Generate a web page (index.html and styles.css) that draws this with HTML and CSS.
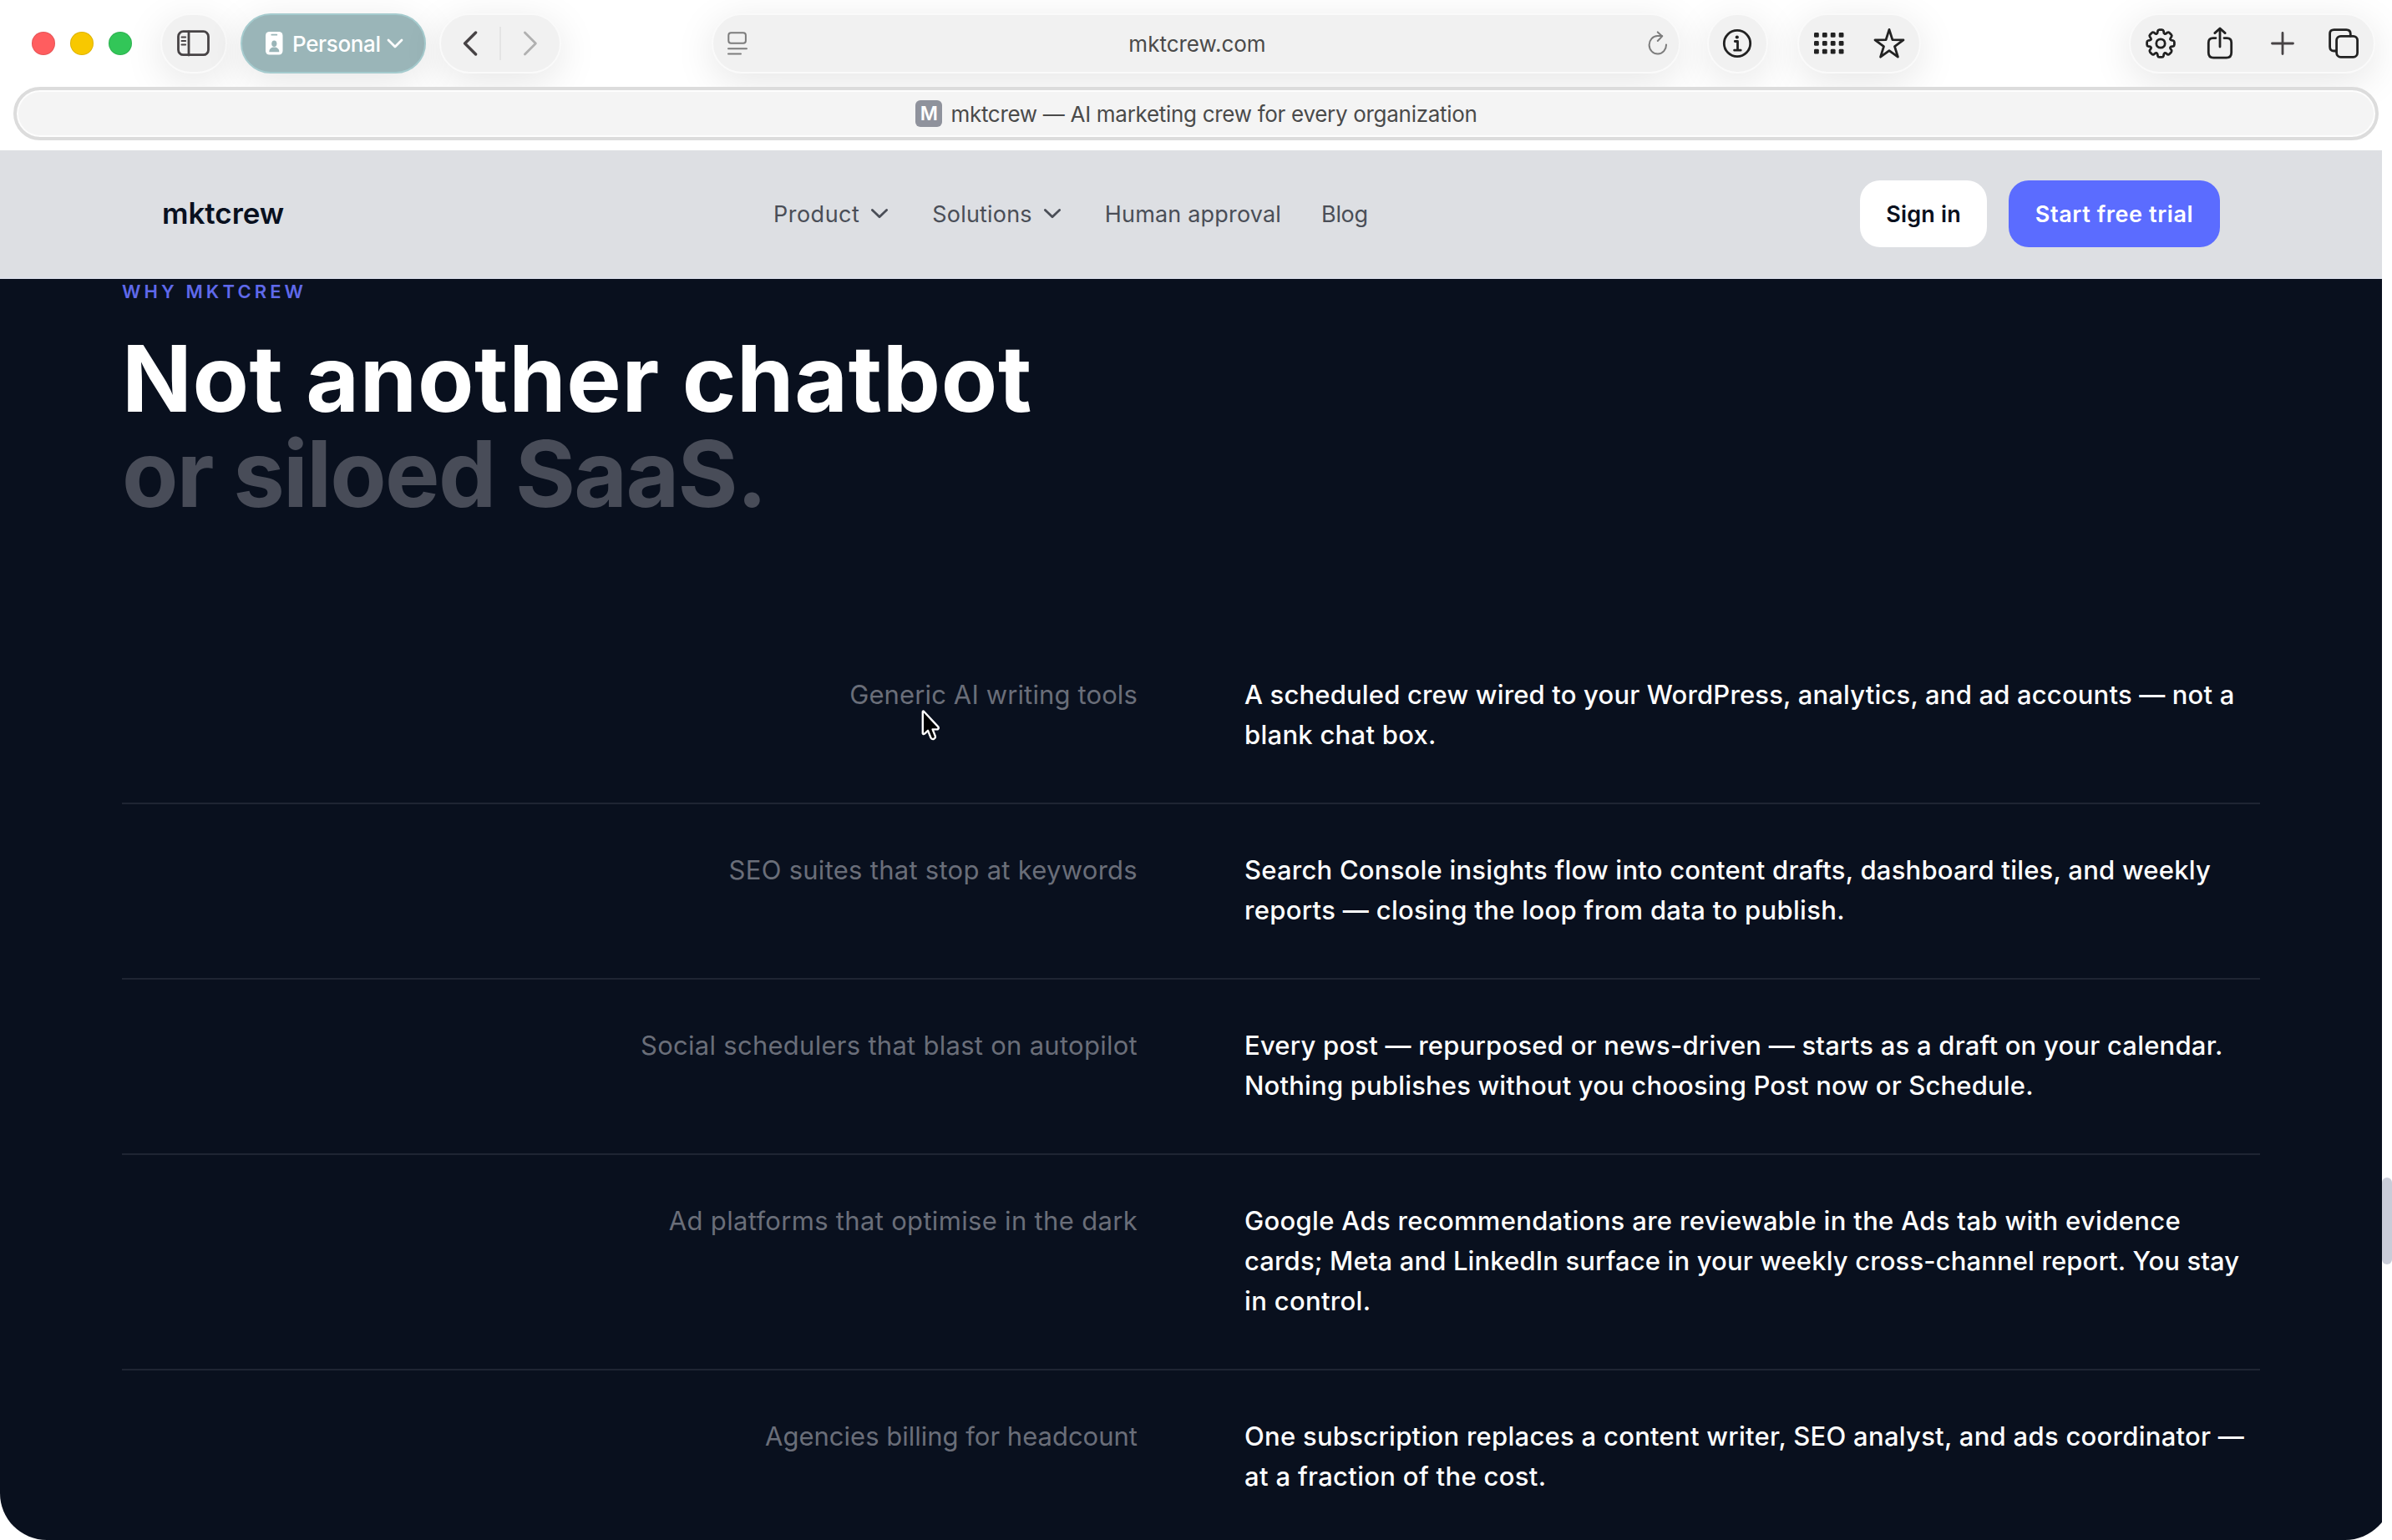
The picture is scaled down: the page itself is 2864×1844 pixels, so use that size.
FILE: index.html
```html
<!DOCTYPE html>
<html lang="en">
<head>
<meta charset="utf-8">
<title>mktcrew — AI marketing crew for every organization</title>
<link rel="stylesheet" href="styles.css">
</head>
<body>
<div class="window">
  <div class="toolbar">
    <div class="lights"><i class="light close"></i><i class="light minimize"></i><i class="light zoom"></i></div>

    <div class="pill sidebar-toggle">
      <svg class="line dark" width="40" height="32" viewBox="0 0 40 32"><rect x="1.5" y="1.7" width="36" height="28" rx="6"/><path d="M14 2v28"/><path class="thin" d="M5.5 8.6h4.6M5.5 13h4.6M5.5 17.5h4.6"/></svg>
    </div>

    <div class="pill profile">
      <svg width="21" height="28" viewBox="0 0 21 28"><rect width="20.5" height="27.5" rx="4.5" fill="#fff"/><path d="M7.3 3.7h6" stroke="#9ab5b8" stroke-width="1.8" stroke-linecap="round"/><ellipse cx="10.3" cy="14.2" rx="3.1" ry="3.8" fill="#9ab5b8"/><path d="M4.3 24.2c0-3.8 2.6-5.6 6-5.6s6 1.8 6 5.6z" fill="#9ab5b8"/></svg>
      <span class="profile-name">Personal</span>
      <svg class="line white" width="20" height="12" viewBox="0 0 20 12"><path d="M2 2l8 8 8-8"/></svg>
    </div>

    <div class="pill history">
      <svg class="line dark" width="18" height="30" viewBox="0 0 18 30"><path class="bold" d="M15.6 2L2.6 15l13 13"/></svg>
      <span class="divider"></span>
      <svg class="line faded" width="18" height="30" viewBox="0 0 18 30"><path d="M2.4 2l13 13-13 13"/></svg>
    </div>

    <div class="pill address">
      <svg class="line mid" width="24" height="28" viewBox="0 0 24 28"><rect x="1.3" y="1.2" width="20.6" height="12.6" rx="3"/><path d="M1 20.2h22M1 26.5h15"/></svg>
      <span class="url">mktcrew.com</span>
      <svg class="line mid" width="26" height="30" viewBox="0 0 26 30"><path d="M23 16.4A10.2 10.8 0 1 1 12.6 6h5.6M12.8 1.4L18.2 6.4L12.8 12"/></svg>
    </div>

    <div class="pill info">
      <svg class="line black" width="36" height="36" viewBox="0 0 36 36"><circle cx="18" cy="18" r="15.7"/><path d="M15.3 15.5h3.2v10.6M14.6 26.2h7.6"/><circle cx="17.8" cy="10.5" r="2.1" class="solid"/></svg>
    </div>

    <div class="pill tools">
      <svg width="36" height="28" viewBox="0 0 36 28" fill="#222"><g id="dots"><rect x="0" y="1" width="5.8" height="5.8" rx="1.4"/><rect x="9.9" y="1" width="5.8" height="5.8" rx="1.4"/><rect x="19.8" y="1" width="5.8" height="5.8" rx="1.4"/><rect x="29.7" y="1" width="5.8" height="5.8" rx="1.4"/></g><use href="#dots" y="10"/><use href="#dots" y="19.8"/></svg>
      <svg class="line black" width="38" height="38" viewBox="0 0 38 38"><path d="M19 2.4L22.9 14.6L36 14.9L25.5 22.6L29.4 35.2L19 27.6L8.6 35.2L12.5 22.6L2 14.9L15.1 14.6Z"/></svg>
    </div>

    <div class="pill actions">
      <svg class="line black" width="38" height="38" viewBox="-19 -19 38 38"><defs><path id="tooth" d="M-4.7 -11.7C-3.4 -12.2 -3.9 -13.2 -3.5 -14.8Q-3.1 -16.4 -1.6 -16.4H1.6Q3.1 -16.4 3.5 -14.8C3.9 -13.2 3.4 -12.2 4.7 -11.7"/></defs><use href="#tooth"/><use href="#tooth" transform="rotate(45)"/><use href="#tooth" transform="rotate(90)"/><use href="#tooth" transform="rotate(135)"/><use href="#tooth" transform="rotate(180)"/><use href="#tooth" transform="rotate(225)"/><use href="#tooth" transform="rotate(270)"/><use href="#tooth" transform="rotate(315)"/><circle r="5.2"/></svg>
      <svg class="line black" width="32" height="40" viewBox="0 0 32 40"><path d="M11 13.6H7.6Q2.3 13.6 2.3 19V31Q2.3 37.2 8.3 37.2H23.7Q29.7 37.2 29.7 31V19Q29.7 13.6 24.4 13.6H21M16 2.5V24M9.8 7.6L16 2L22.2 7.6"/></svg>
      <svg class="line dark" width="30" height="30" viewBox="0 0 30 30"><path d="M15 2.5v25M2.5 15h25"/></svg>
      <svg class="line black" width="38" height="38" viewBox="0 0 38 38"><rect x="10.6" y="10.3" width="25" height="25" rx="5"/><path d="M10.6 28H7.6Q2.6 28 2.6 23V7.6Q2.6 2.6 7.6 2.6H22.3Q27.3 2.6 27.3 7.6V10"/></svg>
    </div>
  </div>

  <div class="tab-strip">
    <div class="tab">
      <span class="favicon">M</span>
      <span class="tab-title">mktcrew — AI marketing crew for every organization</span>
    </div>
  </div>

  <div class="viewport">
    <div class="page">
      <header class="site-header">
        <a class="logo">mktcrew</a>
        <nav class="site-nav">
          <a class="nav-product"><span>Product</span><svg class="line slate" width="22" height="14" viewBox="0 0 22 14"><path d="M2.4 2.4l8.6 8.4 8.6-8.4"/></svg></a>
          <a class="nav-solutions"><span>Solutions</span><svg class="line slate" width="22" height="14" viewBox="0 0 22 14"><path d="M2.4 2.4l8.6 8.4 8.6-8.4"/></svg></a>
          <a class="nav-approval">Human approval</a>
          <a class="nav-blog">Blog</a>
        </nav>
        <div class="site-actions">
          <a class="button light-button">Sign in</a>
          <a class="button primary-button">Start free trial</a>
        </div>
      </header>

      <main class="why">
        <p class="eyebrow">WHY MKTCREW</p>
        <h1 class="headline"><span class="headline-main">Not another chatbot</span><br><span class="headline-muted">or siloed SaaS.</span></h1>

        <div class="comparison">
          <div class="row">
            <div class="them track-1">Generic AI writing tools</div>
            <div class="us"><span class="track-2">A scheduled crew wired to your WordPress, analytics, and ad accounts — not a</span><br><span class="track-3">blank chat box.</span></div>
          </div>
          <div class="row">
            <div class="them track-3">SEO suites that stop at keywords</div>
            <div class="us"><span class="track-2b">Search Console insights flow into content drafts, dashboard tiles, and weekly</span><br><span class="track-4">reports — closing the loop from data to publish.</span></div>
          </div>
          <div class="row">
            <div class="them track-3">Social schedulers that blast on autopilot</div>
            <div class="us"><span class="track-2b">Every post — repurposed or news-driven — starts as a draft on your calendar.</span><br><span class="track-2">Nothing publishes without you choosing Post now or Schedule.</span></div>
          </div>
          <div class="row">
            <div class="them track-4">Ad platforms that optimise in the dark</div>
            <div class="us"><span class="track-4">Google Ads recommendations are reviewable in the Ads tab with evidence</span><br><span class="track-1">cards; Meta and LinkedIn surface in your weekly cross-channel report. You stay</span><br><span class="track-4">in control.</span></div>
          </div>
          <div class="row">
            <div class="them">Agencies billing for headcount</div>
            <div class="us"><span class="track-3">One subscription replaces a content writer, SEO analyst, and ads coordinator —</span><br><span class="track-4">at a fraction of the cost.</span></div>
          </div>
        </div>
      </main>
    </div>
    <div class="scrollbar"><div class="thumb"></div></div>
  </div>

  <svg class="pointer" width="24" height="38" viewBox="0 0 24 38"><path d="M1.8 2.2V28.2Q2.4 29.6 4 28.6L8 24.8L11.6 33.6Q13 35.6 15.2 34.8Q17.4 33.6 16.8 31.4L13.6 23.4H19.6Q21.4 22.4 20.4 20.4L3 1.8Q2 1.2 1.8 2.2Z"/></svg>
</div>
</body>
</html>
```
FILE: styles.css
```css
* { box-sizing: border-box; }

body {
  margin: 0;
  background: #fff;
  font-family: Inter, "Liberation Sans", sans-serif;
}

svg { display: block; flex: none; }

.window {
  position: relative;
  display: flex;
  flex-direction: column;
  width: 2864px;
  height: 1844px;
  overflow: hidden;
  border-radius: 0 0 56px 56px;
}

/* Line icons */
.line { fill: none; stroke-width: 2.8; stroke-linecap: round; stroke-linejoin: round; }
.line .bold { stroke-width: 3.4; }
.line .thin { stroke-width: 2; }
.dark { stroke: #474345; }
.mid { stroke: #7c7c7c; stroke-width: 2; }
.black { stroke: #222; }
.black .solid { fill: #222; stroke: none; }
.white { stroke: #fff; }
.faded { stroke: #b0b0b0; }
.slate { stroke: #4a4e57; }

/* Browser toolbar */
.toolbar {
  display: flex;
  align-items: center;
  height: 104px;
  padding-left: 38px;
}

.lights { display: flex; gap: 18px; margin-right: 34px; }
.light { width: 28px; height: 28px; border-radius: 50%; border: 1px solid rgba(0, 0, 0, .1); }
.close { background: #ff5d5f; }
.minimize { background: #f8c800; }
.zoom { background: #32c658; }

.pill {
  display: flex;
  align-items: center;
  height: 72px;
  border: 2px solid #fafafa;
  border-radius: 36px;
  background: #f1f1f1;
  box-shadow: 0 10px 48px rgba(0, 0, 0, .1);
}

.sidebar-toggle { justify-content: center; width: 80px; margin-right: 16px; }

.profile {
  width: 222px;
  margin-right: 16px;
  padding-left: 28px;
  border-color: #a5cbce;
  background: #9ab5b8;
  color: #fff;
}
.profile-name { width: 113px; margin-left: 11px; font-size: 26px; font-weight: 500; letter-spacing: -.35px; }

.history { width: 146px; margin-right: 180px; padding-left: 26px; }
.history .divider { width: 2px; height: 40px; margin: 0 26px 0 26px; background: #e4e4e4; }

.address { width: 1160px; margin-right: 32px; padding: 0 12px 0 17px; justify-content: space-between; }
.url { font-size: 26px; color: #4a4a4a; }

.info { width: 73px; margin-right: 35px; padding-left: 16px; }

.tools { gap: 35px; width: 148px; margin-right: 249px; padding-left: 18px; }

.actions { width: 295px; padding-left: 17px; }
.actions svg:nth-child(2) { margin: 0 44px 0 36px; }
.actions svg:nth-child(3) { margin-right: 39px; }

/* Tab strip */
.tab-strip { position: relative; z-index: 1; height: 76px; padding: 0 16px; }
.tab {
  display: flex;
  align-items: center;
  justify-content: center;
  gap: 10px;
  height: 64px;
  padding-left: 1px;
  border: 4px solid #dcdcdc;
  border-radius: 32px;
  background: #f4f4f4;
  box-shadow: inset 0 0 0 2px #fdfdfd;
}
.favicon {
  width: 32px;
  height: 32px;
  border-radius: 6px;
  background: #8f929c;
  color: #fff;
  font-size: 23px;
  font-weight: 600;
  line-height: 33px;
  text-align: center;
}
.tab-title { font-size: 26px; letter-spacing: -.3px; color: #4a4a4a; }

/* Page viewport */
.viewport { display: flex; flex: 1; min-height: 0; }
.page { width: 2852px; overflow: hidden; background: #09101e; }
.scrollbar { width: 12px; padding-top: 1230px; }
.thumb { height: 104px; border-radius: 6px; background: #cacdd9; }

/* Site header */
.site-header {
  display: flex;
  align-items: center;
  height: 154px;
  padding: 0 194px;
  border-bottom: 2px solid #dde1ea;
  background: #dddfe3;
}
.logo { width: 732px; padding-bottom: 2px; font-size: 35px; font-weight: 600; letter-spacing: -.05px; color: #09101e; }
.site-nav { display: flex; gap: 52px; flex: 1; font-size: 27px; color: #4a4e57; }
.site-nav a { display: flex; align-items: center; gap: 13px; }
.nav-product { letter-spacing: .49px; }
.nav-solutions, .nav-approval { letter-spacing: .18px; }
.site-nav .nav-blog { margin-left: -4px; letter-spacing: -.3px; }

.site-actions { display: flex; gap: 26px; }
.button {
  display: flex;
  align-items: center;
  justify-content: center;
  height: 80px;
  border-radius: 24px;
  font-size: 27px;
  font-weight: 600;
}
.light-button { width: 152px; background: #fff; color: #09101e; letter-spacing: .18px; }
.primary-button { width: 253px; background: #5b6cff; color: #fff; letter-spacing: .6px; }

/* Why section */
.why { padding: 3px 146px 0; }
.eyebrow {
  margin: 0 0 35px;
  font-size: 22px;
  font-weight: 600;
  line-height: 24px;
  letter-spacing: 4.1px;
  color: #5f69ea;
}
.headline { margin: 0 0 129px; font-size: 110px; font-weight: 700; line-height: 114px; color: #fff; }
.headline-main { letter-spacing: .65px; }
.headline-muted { letter-spacing: -1.7px; color: #484c58; }

.row {
  display: grid;
  grid-template-columns: 1fr 1fr;
  column-gap: 128px;
  padding: 55px 0 57px;
  border-bottom: 2px solid #1f2533;
  font-size: 31px;
  line-height: 48px;
}
.row:last-child { border-bottom: 0; }
.them { text-align: right; color: #6a6e79; }
.us { font-weight: 500; color: #fff; white-space: nowrap; }

.track-1 { letter-spacing: .13px; }
.track-2 { letter-spacing: .17px; }
.track-2b { letter-spacing: .22px; }
.track-3 { letter-spacing: .27px; }
.track-4 { letter-spacing: .32px; }

/* Mouse pointer over the page */
.pointer { position: absolute; left: 1103px; top: 850px; fill: #000; stroke: #fff; stroke-width: 2.4; stroke-linejoin: round; }
```
